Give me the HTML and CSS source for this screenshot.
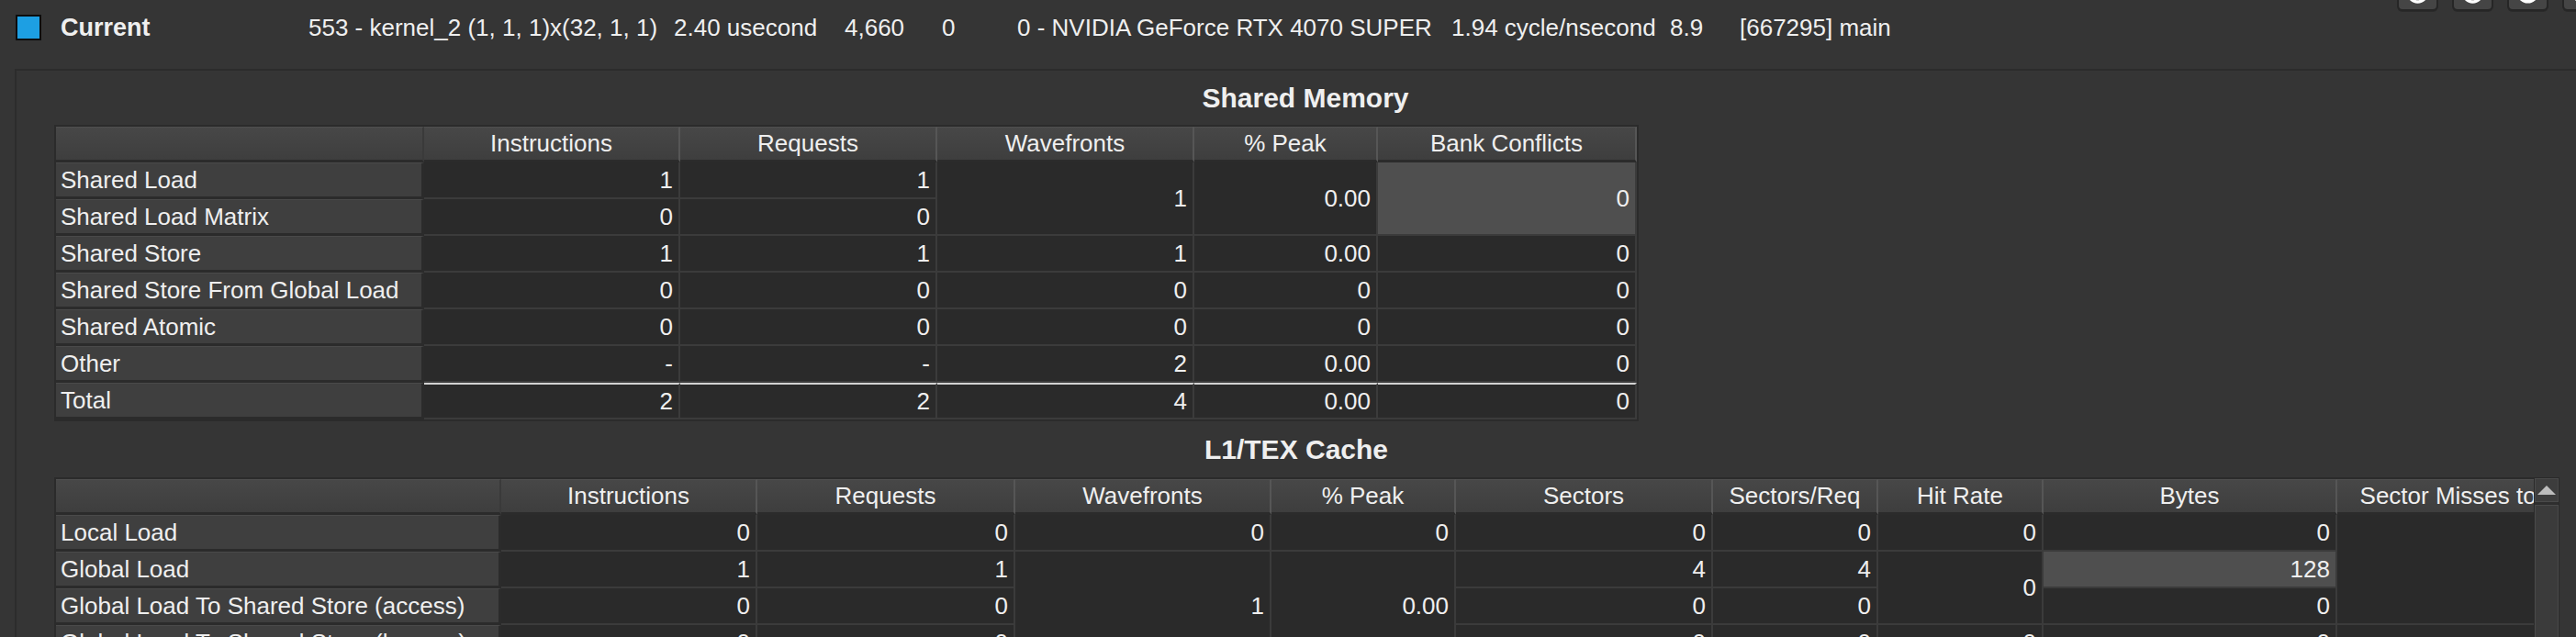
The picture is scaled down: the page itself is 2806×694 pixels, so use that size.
FILE: index.html
```
<!DOCTYPE html>
<html>
<head>
<meta charset="utf-8">
<link rel="stylesheet" href="styles.css">
</head>
<body>
<div class="topbar">
  <div class="tools">
    <div class="tool"><svg width="41" height="41" viewBox="0 0 41 41"><circle cx="20.5" cy="23" r="10" fill="none" stroke="#fff" stroke-width="3.5"/></svg></div>
    <div class="tool"><svg width="41" height="41" viewBox="0 0 41 41"><circle cx="20.5" cy="23" r="10" fill="none" stroke="#fff" stroke-width="3.5"/></svg></div>
    <div class="tool"><svg width="41" height="41" viewBox="0 0 41 41"><circle cx="20.5" cy="23" r="11.5" fill="#fff"/></svg></div>
    <div class="tool"><svg width="41" height="41" viewBox="0 0 41 41"><circle cx="20.5" cy="23" r="10" fill="none" stroke="#fff" stroke-width="3.5"/></svg></div>
  </div>
  <div class="summary">
    <div class="swatch"></div>
    <div class="bold">Current</div>
    <div>553 - kernel_2 (1, 1, 1)x(32, 1, 1)</div>
    <div>2.40 usecond</div>
    <div>4,660</div>
    <div>0</div>
    <div>0 - NVIDIA GeForce RTX 4070 SUPER</div>
    <div>1.94 cycle/nsecond</div>
    <div>8.9</div>
    <div>[667295] main</div>
  </div>
</div>
<div class="panel">
  <div class="title title-sm">Shared Memory</div>
  <div class="tbl-wrap">
    <div class="grid grid-sm">
      <div class="hd hd-first"></div>
      <div class="hd">Instructions</div>
      <div class="hd">Requests</div>
      <div class="hd">Wavefronts</div>
      <div class="hd">% Peak</div>
      <div class="hd">Bank Conflicts</div>

      <div class="l">Shared Load</div>
      <div class="v">1</div>
      <div class="v">1</div>
      <div class="v span2">1</div>
      <div class="v span2">0.00</div>
      <div class="v span2 sel">0</div>

      <div class="l">Shared Load Matrix</div>
      <div class="v">0</div>
      <div class="v">0</div>

      <div class="l">Shared Store</div>
      <div class="v">1</div>
      <div class="v">1</div>
      <div class="v">1</div>
      <div class="v">0.00</div>
      <div class="v">0</div>

      <div class="l">Shared Store From Global Load</div>
      <div class="v">0</div>
      <div class="v">0</div>
      <div class="v">0</div>
      <div class="v">0</div>
      <div class="v">0</div>

      <div class="l">Shared Atomic</div>
      <div class="v">0</div>
      <div class="v">0</div>
      <div class="v">0</div>
      <div class="v">0</div>
      <div class="v">0</div>

      <div class="l">Other</div>
      <div class="v">-</div>
      <div class="v">-</div>
      <div class="v">2</div>
      <div class="v">0.00</div>
      <div class="v">0</div>

      <div class="l">Total</div>
      <div class="v tot">2</div>
      <div class="v tot">2</div>
      <div class="v tot">4</div>
      <div class="v tot">0.00</div>
      <div class="v tot">0</div>
    </div>
  </div>

  <div class="title title-l1">L1/TEX Cache</div>
  <div class="l1-box">
    <div class="viewport">
      <div class="grid grid-l1">
        <div class="hd hd-first"></div>
        <div class="hd">Instructions</div>
        <div class="hd">Requests</div>
        <div class="hd">Wavefronts</div>
        <div class="hd">% Peak</div>
        <div class="hd">Sectors</div>
        <div class="hd">Sectors/Req</div>
        <div class="hd">Hit Rate</div>
        <div class="hd">Bytes</div>
        <div class="hd hd-last">Sector Misses to Device</div>

        <div class="l">Local Load</div>
        <div class="v">0</div>
        <div class="v">0</div>
        <div class="v">0</div>
        <div class="v">0</div>
        <div class="v">0</div>
        <div class="v">0</div>
        <div class="v">0</div>
        <div class="v">0</div>
        <div class="v span3">0</div>

        <div class="l">Global Load</div>
        <div class="v">1</div>
        <div class="v">1</div>
        <div class="v span3">1</div>
        <div class="v span3">0.00</div>
        <div class="v">4</div>
        <div class="v">4</div>
        <div class="v span2">0</div>
        <div class="v sel">128</div>

        <div class="l">Global Load To Shared Store (access)</div>
        <div class="v">0</div>
        <div class="v">0</div>
        <div class="v">0</div>
        <div class="v">0</div>
        <div class="v">0</div>

        <div class="l">Global Load To Shared Store (bypass)</div>
        <div class="v">0</div>
        <div class="v">0</div>
        <div class="v">0</div>
        <div class="v">0</div>
        <div class="v span2">0</div>
        <div class="v">0</div>
        <div class="v">0</div>
      </div>
    </div>
    <div class="scrollbar">
      <div class="sb-up"><svg width="24" height="16" viewBox="0 0 24 16"><polygon points="12,3 22,13 2,13" fill="#bdbdbd"/></svg></div>
      <div class="sb-thumb"></div>
    </div>
  </div>
</div>
</body>
</html>
```
FILE: styles.css
```
* { box-sizing: border-box; }
html, body { margin: 0; padding: 0; }
body {
  width: 2806px;
  height: 694px;
  overflow: hidden;
  background: #353535;
  color: #efefef;
  font-family: "Liberation Sans", Arial, sans-serif;
  font-size: 26px;
}
.topbar {
  position: relative;
  height: 75px;
}
.tools {
  position: absolute;
  top: -33px;
  left: 2611px;
  display: flex;
  gap: 15px;
}
.tool {
  width: 45px;
  height: 45px;
  flex: none;
  border-radius: 6px;
  background: #454545;
  border: 2px solid #262626;
  box-shadow: 0 1px 0 #2a2a2a;
  overflow: hidden;
}
.tool svg { display: block; }
.summary {
  display: grid;
  grid-template-columns: 49px 270px 398px 186px 106px 82px 473px 238px 76px auto;
  align-items: center;
  padding-left: 17px;
  height: 60px;
  white-space: nowrap;
}
.swatch {
  width: 28px;
  height: 28px;
  background: #1d9fe3;
  border: 2px solid #0d0d0d;
}
.bold { font-weight: bold; font-size: 27px; }
.panel {
  margin-left: 16px;
  border-left: 2px solid #2c2c2c;
  border-top: 2px solid #2c2c2c;
  height: 620px;
}
.title {
  font-weight: bold;
  font-size: 30px;
  text-align: center;
  display: flex;
  align-items: center;
  justify-content: center;
}
.title-sm { height: 59px; padding-left: 20px; }
.title-l1 { height: 61px; }
.tbl-wrap {
  margin-left: 41px;
  display: flex;
}
.grid {
  display: grid;
  border: 2px solid #2b2b2b;
  background: #2b2b2b;
}
.grid-sm {
  grid-template-columns: 401px 279px 280px 280px 200px 282px;
  grid-template-rows: 39px repeat(7, 40px);
}
.hd {
  background: linear-gradient(#474747, #3e3e3e);
  border-top: 1px solid #4f4f4f;
  border-right: 2px solid #565656;
  border-bottom: 3px solid #2b2b2b;
  display: flex;
  align-items: center;
  justify-content: center;
  white-space: nowrap;
  overflow: hidden;
}
.hd-first { border-right: 2px solid #3a3a3a; }
.hd-last { justify-content: center; }
.l {
  background: #3f3f3f;
  border-top: 1px solid #4a4a4a;
  border-bottom: 3px solid #2b2b2b;
  border-right: 3px solid #2b2b2b;
  display: flex;
  align-items: center;
  padding-left: 5px;
  white-space: nowrap;
  overflow: hidden;
}
.v {
  background: #2a2a2a;
  border-right: 2px solid #3b3b3b;
  border-bottom: 2px solid #3b3b3b;
  display: flex;
  align-items: center;
  justify-content: flex-end;
  padding-right: 6px;
  white-space: nowrap;
}
.span2 { grid-row: span 2; }
.span3 { grid-row: span 3; }
.sel { background: #4f4f4f; }
.tot { border-top: 2px solid #d2d2d2; }
.l1-box {
  margin-left: 41px;
  display: flex;
  align-items: flex-start;
}
.viewport {
  width: 2701px;
  height: 200px;
  overflow: hidden;
  flex: none;
}
.grid-l1 {
  width: max-content;
  grid-template-columns: 485px 279px 281px 279px 201px 280px 180px 180px 320px 330px;
  grid-template-rows: 39px repeat(4, 40px);
  border-right: none;
}
.scrollbar {
  width: 28px;
  flex: none;
  height: 200px;
  background: #2e2e2e;
  border: 1px solid #2a2a2a;
  display: flex;
  flex-direction: column;
  gap: 3px;
}
.sb-up {
  height: 26px;
  background: #3d3d3d;
  border: 1px solid #4a4a4a;
  display: flex;
  align-items: center;
  justify-content: center;
}
.sb-up svg { display: block; }
.sb-thumb {
  flex: 1;
  background: #3b3b3b;
  border: 1px solid #4a4a4a;
}
```
